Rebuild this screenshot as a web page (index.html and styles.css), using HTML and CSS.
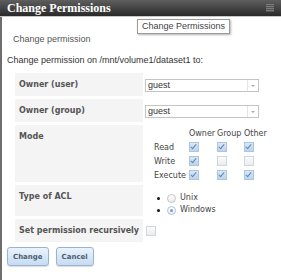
FILE: index.html
```html
<!DOCTYPE html>
<html lang="en">
<head>
    <meta charset="UTF-8">
    <title>Change Permissions</title>
    <link rel="stylesheet" href="styles.css">
</head>
<body>
    <div class="dialog">
        <div class="titlebar">
            <span class="title">Change Permissions</span>
            <span class="close"></span>
        </div>
        <div class="tooltip">Change Permissions</div>

        <div class="dialog-body">
            <div class="tab-title">Change permission</div>
            <div class="intro">Change permission on /mnt/volume1/dataset1 to:</div>

            <div class="form">
                <div class="label">Owner (user)</div>
                <div class="value">
                    <div class="select"><span>guest</span><span class="arrow"></span></div>
                </div>

                <div class="label">Owner (group)</div>
                <div class="value">
                    <div class="select"><span>guest</span><span class="arrow"></span></div>
                </div>

                <div class="label">Mode</div>
                <div class="value">
                    <div class="mode">
                        <span></span><span>Owner</span><span>Group</span><span>Other</span>
                        <span>Read</span><span class="cb on"></span><span class="cb on"></span><span class="cb on"></span>
                        <span>Write</span><span class="cb on"></span><span class="cb"></span><span class="cb"></span>
                        <span>Execute</span><span class="cb on"></span><span class="cb on"></span><span class="cb on"></span>
                    </div>
                </div>

                <div class="label">Type of ACL</div>
                <div class="value">
                    <ul class="radios">
                        <li><span class="radio"></span>Unix</li>
                        <li><span class="radio on"></span>Windows</li>
                    </ul>
                </div>

                <div class="label">Set permission recursively</div>
                <div class="value value-check">
                    <span class="cb"></span>
                </div>
            </div>

            <div class="buttons">
                <button class="btn">Change</button>
                <button class="btn">Cancel</button>
            </div>
        </div>
    </div>
</body>
</html>
```

FILE: styles.css
```css
body {
    margin: 0;
    font-family: 'Liberation Sans', Arial, sans-serif;
    font-size: 9px;
    color: #333;
    background: #fff;
}
.dialog {
    position: relative;
    width: 281px;
    height: 280px;
    overflow: hidden;
}
.titlebar {
    height: 16px;
    display: flex;
    align-items: center;
    justify-content: space-between;
    padding: 0 7px;
    background: linear-gradient(#5e5e5e, #2a2a2a);
    border-bottom: 1px solid #c8c8c8;
}
.title {
    font-family: 'Liberation Serif', 'Times New Roman', serif;
    font-weight: bold;
    font-size: 12px;
    color: #fff;
}
.close {
    width: 8px;
    height: 8px;
    background: repeating-linear-gradient(#7a7a7a 0 1px, #555 1px 2px);
}
.tooltip {
    position: absolute;
    left: 137px;
    top: 19px;
    padding: 1px 4px;
    background: #fff;
    border: 1px solid #9a9a9a;
    box-shadow: 1px 1px 2px rgba(0,0,0,0.3);
    color: #444;
    line-height: 11px;
}
.dialog-body {
    height: 263px;
    border-left: 2px solid #6e6e6e;
    padding: 0 0 0 5px;
}
.tab-title {
    padding: 17px 0 0 6px;
    line-height: 10px;
    color: #555;
}
.intro {
    margin-top: 11px;
    line-height: 10px;
    color: #333;
}
.form {
    display: grid;
    grid-template-columns: 128px 116px;
    row-gap: 3px;
    column-gap: 2px;
    margin: 8px 0 0 8px;
}
.label {
    background: #f4f4f4;
    padding: 7px 0 6px 4px;
    font-family: 'DejaVu Sans', Verdana, sans-serif;
    font-weight: bold;
    font-size: 8px;
    line-height: 10px;
    color: #555;
}
.value {
    display: flex;
    align-items: flex-start;
}
.select {
    margin-top: 6px;
    width: 112px;
    height: 11px;
    display: flex;
    justify-content: space-between;
    border: 1px solid #c4c4c4;
    background: #fff;
    line-height: 11px;
    color: #333;
}
.select span:first-child {
    padding-left: 2px;
}
.arrow {
    width: 10px;
    border-left: 1px solid #e4e4e4;
    position: relative;
}
.arrow::after {
    content: "";
    position: absolute;
    left: 3px;
    top: 5px;
    border: 2px solid transparent;
    border-top: 2px solid #aaa;
}
.mode {
    display: grid;
    grid-template-columns: 35px 28px 27px 28px;
    grid-auto-rows: 14px;
    align-items: center;
    margin: 1px 0 0 9px;
    font-family: 'DejaVu Sans', Verdana, sans-serif;
    font-size: 8px;
    color: #444;
}
.cb {
    display: block;
    width: 8px;
    height: 8px;
    border: 1px solid #cfd8e2;
    background: linear-gradient(#fbfbfb, #ececec);
}
.cb.on {
    border-color: #adc6df;
    background: linear-gradient(#d8e7f6, #bcd4ed);
    position: relative;
}
.cb.on::after {
    content: "";
    position: absolute;
    left: 2px;
    top: 0px;
    width: 2px;
    height: 5px;
    border: solid #5f86b3;
    border-width: 0 1.5px 1.5px 0;
    transform: rotate(40deg);
}
.radios {
    margin: 7px 0 0 0;
    padding: 0 0 0 12px;
    font-family: 'DejaVu Sans', Verdana, sans-serif;
    font-size: 8px;
    line-height: 12px;
    color: #444;
}
.radios li {
    display: flex;
    align-items: center;
}
.radios li::before {
    content: "";
    width: 3px;
    height: 3px;
    border-radius: 50%;
    background: #111;
    margin-right: 7px;
}
.radio {
    width: 7px;
    height: 7px;
    border: 1px solid #c4c4c4;
    border-radius: 50%;
    background: linear-gradient(#fff, #ececec);
    margin-right: 4px;
    position: relative;
}
.radio.on {
    border-color: #a9c3dd;
}
.radio.on::after {
    content: "";
    position: absolute;
    left: 2px;
    top: 2px;
    width: 3px;
    height: 3px;
    border-radius: 50%;
    background: #7f9fc0;
}
.value-check {
    align-items: center;
    padding-left: 1px;
}
.buttons {
    display: flex;
    gap: 7px;
    margin-top: 5px;
}
.btn {
    height: 19px;
    padding: 0 5px;
    font-family: 'DejaVu Sans', Verdana, sans-serif;
    font-weight: bold;
    font-size: 7px;
    color: #4f5e70;
    background: linear-gradient(#eaf3fc, #c6dcf3);
    border: 1px solid #9ab4d0;
    border-radius: 3px;
    box-shadow: 0 1px 1px rgba(0,0,0,0.15);
}
```
